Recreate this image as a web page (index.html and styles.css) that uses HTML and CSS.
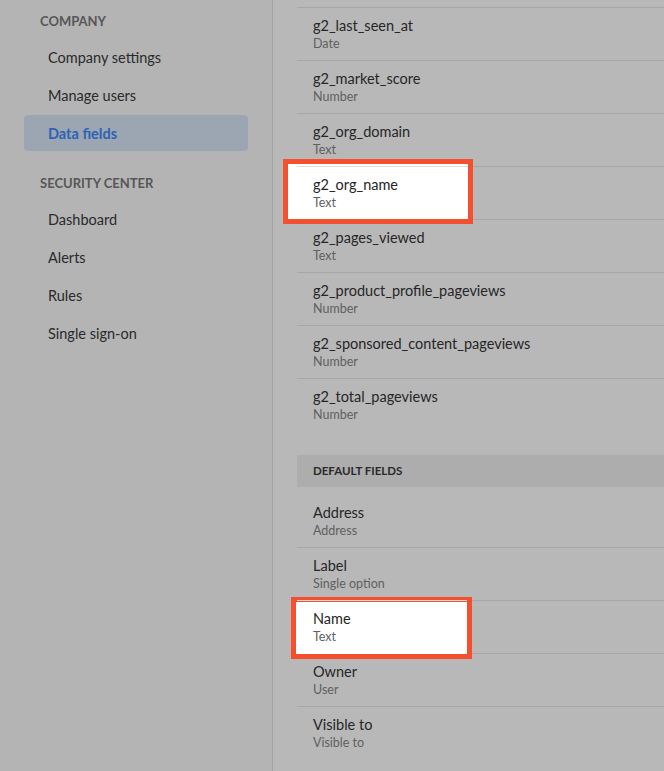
FILE: index.html
```html
<!DOCTYPE html>
<html lang="en">
<head>
<meta charset="utf-8">
<title>Data fields</title>
<link rel="stylesheet" href="styles.css">
</head>
<body>
<div class="app">
  <nav class="sidebar">
    <div class="nav-heading">COMPANY</div>
    <a class="nav-item">Company settings</a>
    <a class="nav-item">Manage users</a>
    <a class="nav-item active">Data fields</a>
    <div class="nav-heading nav-heading-gap">SECURITY CENTER</div>
    <a class="nav-item">Dashboard</a>
    <a class="nav-item">Alerts</a>
    <a class="nav-item">Rules</a>
    <a class="nav-item">Single sign-on</a>
  </nav>
  <main class="main">
    <div class="field-list">
      <div class="field"><div class="field-name">g2_last_seen_at</div><div class="field-type">Date</div></div>
      <div class="field"><div class="field-name">g2_market_score</div><div class="field-type">Number</div></div>
      <div class="field"><div class="field-name">g2_org_domain</div><div class="field-type">Text</div></div>
      <div class="field hl hl-a"><div class="field-name">g2_org_name</div><div class="field-type">Text</div></div>
      <div class="field"><div class="field-name">g2_pages_viewed</div><div class="field-type">Text</div></div>
      <div class="field"><div class="field-name">g2_product_profile_pageviews</div><div class="field-type">Number</div></div>
      <div class="field"><div class="field-name">g2_sponsored_content_pageviews</div><div class="field-type">Number</div></div>
      <div class="field"><div class="field-name">g2_total_pageviews</div><div class="field-type">Number</div></div>
    </div>
    <div class="group-header">DEFAULT FIELDS</div>
    <div class="field-list field-list-default">
      <div class="field first"><div class="field-name">Address</div><div class="field-type">Address</div></div>
      <div class="field"><div class="field-name">Label</div><div class="field-type">Single option</div></div>
      <div class="field hl hl-b"><div class="field-name">Name</div><div class="field-type">Text</div></div>
      <div class="field"><div class="field-name">Owner</div><div class="field-type">User</div></div>
      <div class="field"><div class="field-name">Visible to</div><div class="field-type">Visible to</div></div>
    </div>
  </main>
</div>
</body>
</html>
```
FILE: styles.css
```css
*, *::before, *::after { box-sizing: border-box; }
html, body {
  margin: 0;
  padding: 0;
  height: 100%;
  overflow: hidden;
}
body {
  font-family: "Lato", "Open Sans", sans-serif;
  background: #b8b8b8;
  color: #2a2a2a;
}
.app {
  display: flex;
  height: 771px;
}
.sidebar {
  width: 273px;
  flex: none;
  background: #b4b4b4;
  border-right: 1px solid #a4a4a4;
  padding: 11px 24px 0 24px;
  display: flex;
  flex-direction: column;
}
.nav-heading {
  font-size: 13px;
  font-weight: 700;
  color: #575757;
  line-height: 20px;
  padding-left: 16px;
  margin-bottom: 8px;
}
.nav-heading-gap { margin-top: 20px; }
.nav-item {
  display: block;
  height: 36px;
  line-height: 37px;
  padding-left: 24px;
  font-size: 14.5px;
  color: #2a2a2a;
  border-radius: 4px;
  margin-bottom: 2px;
}
.nav-item.active {
  background: #9ba6b2;
  color: #2c62b4;
  font-weight: 700;
}
.main {
  flex: 1;
  padding: 7px 0 0 24px;
}
.field-list {
  display: flex;
  flex-direction: column;
}
.field {
  border-top: 1px solid #a7a7a7;
  padding: 8px 0 9px 16px;
}
.field-list > .field:first-child.first { border-top-color: transparent; }
.field-name {
  font-size: 14.5px;
  line-height: 20px;
  color: #262626;
}
.field-type {
  font-size: 12.5px;
  line-height: 15px;
  color: #606060;
}
.group-header {
  margin-top: 24px;
  height: 32px;
  line-height: 32px;
  background: #adadad;
  padding-left: 16px;
  font-size: 11.5px;
  font-weight: 700;
  color: #2a2a2a;
}
.field-list-default { margin-top: 7px; }
.hl {
  position: relative;
  z-index: 1;
  isolation: isolate;
}
.hl::before {
  content: "";
  position: absolute;
  z-index: -1;
  background: #ffffff;
  border: 5px solid #f44f2f;
}
.hl::after {
  content: "";
  position: absolute;
  z-index: -1;
  top: -1px;
  left: 0;
  height: 1px;
  background: #e0e0e0;
}
.hl-a::before { top: -8px; bottom: -5px; left: -14px; width: 190px; }
.hl-a::after { width: 171px; }
.hl-b::before { top: -4px; bottom: -6px; left: -6px; width: 181px; }
.hl-b::after { width: 170px; }
```
